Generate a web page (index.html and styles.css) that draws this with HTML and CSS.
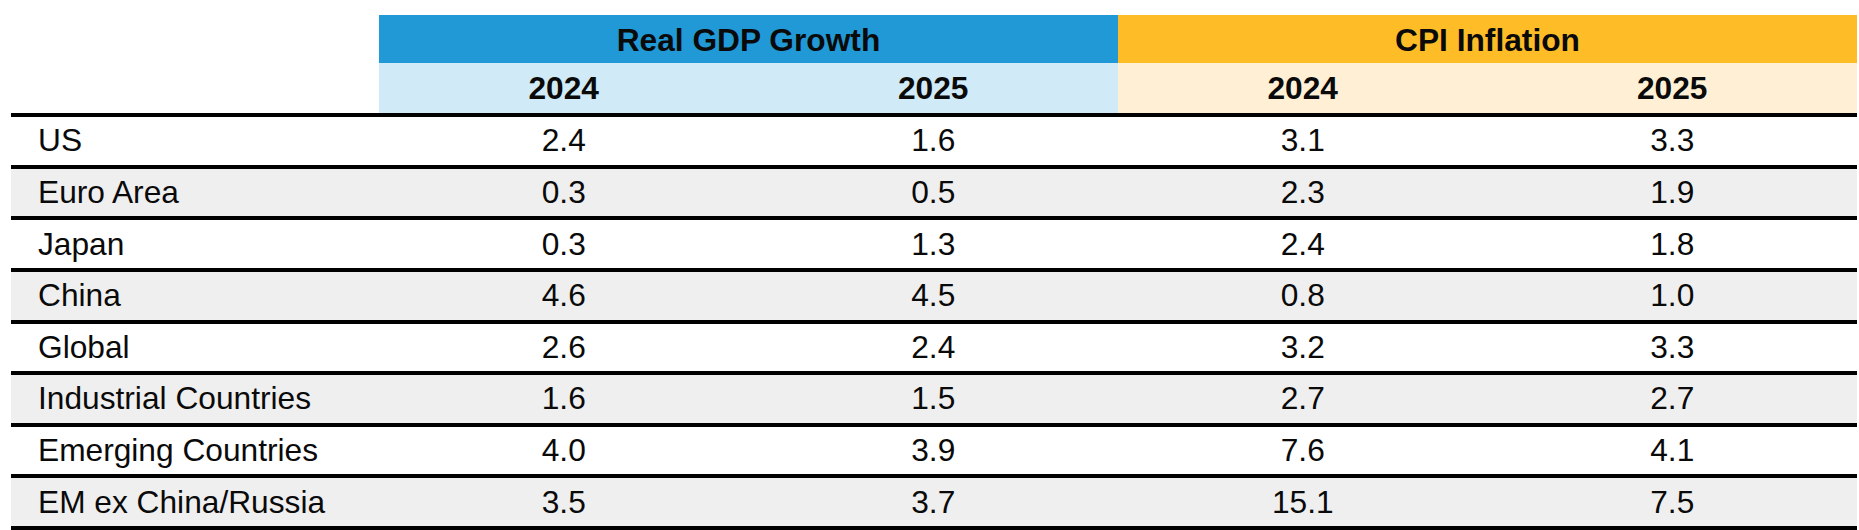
FILE: index.html
```html
<!DOCTYPE html>
<html lang="en">
<head>
<meta charset="utf-8">
<title>Forecast table</title>
<link rel="stylesheet" href="styles.css">
</head>
<body>
<div class="tbl">
  <div class="row head-top">
    <div class="cell blank"></div>
    <div class="cell group gdp">Real GDP Growth</div>
    <div class="cell group cpi">CPI Inflation</div>
  </div>
  <div class="row head-sub">
    <div class="cell blank"></div>
    <div class="cell year gdp-l">2024</div>
    <div class="cell year gdp-l">2025</div>
    <div class="cell year cpi-l">2024</div>
    <div class="cell year cpi-l">2025</div>
  </div>
  <div class="row body">
    <div class="cell label">US</div><div class="cell num">2.4</div><div class="cell num">1.6</div><div class="cell num">3.1</div><div class="cell num">3.3</div>
  </div>
  <div class="row body alt">
    <div class="cell label">Euro Area</div><div class="cell num">0.3</div><div class="cell num">0.5</div><div class="cell num">2.3</div><div class="cell num">1.9</div>
  </div>
  <div class="row body">
    <div class="cell label">Japan</div><div class="cell num">0.3</div><div class="cell num">1.3</div><div class="cell num">2.4</div><div class="cell num">1.8</div>
  </div>
  <div class="row body alt">
    <div class="cell label">China</div><div class="cell num">4.6</div><div class="cell num">4.5</div><div class="cell num">0.8</div><div class="cell num">1.0</div>
  </div>
  <div class="row body">
    <div class="cell label">Global</div><div class="cell num">2.6</div><div class="cell num">2.4</div><div class="cell num">3.2</div><div class="cell num">3.3</div>
  </div>
  <div class="row body alt">
    <div class="cell label">Industrial Countries</div><div class="cell num">1.6</div><div class="cell num">1.5</div><div class="cell num">2.7</div><div class="cell num">2.7</div>
  </div>
  <div class="row body">
    <div class="cell label">Emerging Countries</div><div class="cell num">4.0</div><div class="cell num">3.9</div><div class="cell num">7.6</div><div class="cell num">4.1</div>
  </div>
  <div class="row body alt last">
    <div class="cell label">EM ex China/Russia</div><div class="cell num">3.5</div><div class="cell num">3.7</div><div class="cell num">15.1</div><div class="cell num">7.5</div>
  </div>
</div>
</body>
</html>
```
FILE: styles.css
```css
html, body {
  margin: 0;
  padding: 0;
  background: #ffffff;
}

body {
  font-family: "Liberation Sans", Arial, sans-serif;
  color: #0a0a0a;
}

.tbl {
  margin: 15px 0 0 11px;
  width: 1846px;
}

.row {
  display: grid;
  grid-template-columns: 368px repeat(4, 1fr);
}

.cell {
  display: flex;
  align-items: center;
  justify-content: center;
}

.head-top {
  height: 48px;
}

.head-top .group {
  grid-column: span 2;
  font-weight: bold;
  font-size: 31.7px;
  padding-top: 2px;
  box-sizing: border-box;
}

.gdp { background: #2199d6; }
.cpi { background: #febd27; }

.head-sub {
  height: 50px;
}

.year {
  font-weight: bold;
  font-size: 31.7px;
}

.gdp-l { background: #d0ebf7; }
.cpi-l { background: #fff0d5; }

.body {
  height: 51.625px;
  box-sizing: border-box;
  border-top: 4px solid #000;
  font-size: 31.7px;
}

.body.alt {
  background: #efefef;
}

.body.last {
  height: 55.625px;
  border-bottom: 4px solid #000;
}

.label {
  justify-content: flex-start;
  padding-left: 27px;
}
```
